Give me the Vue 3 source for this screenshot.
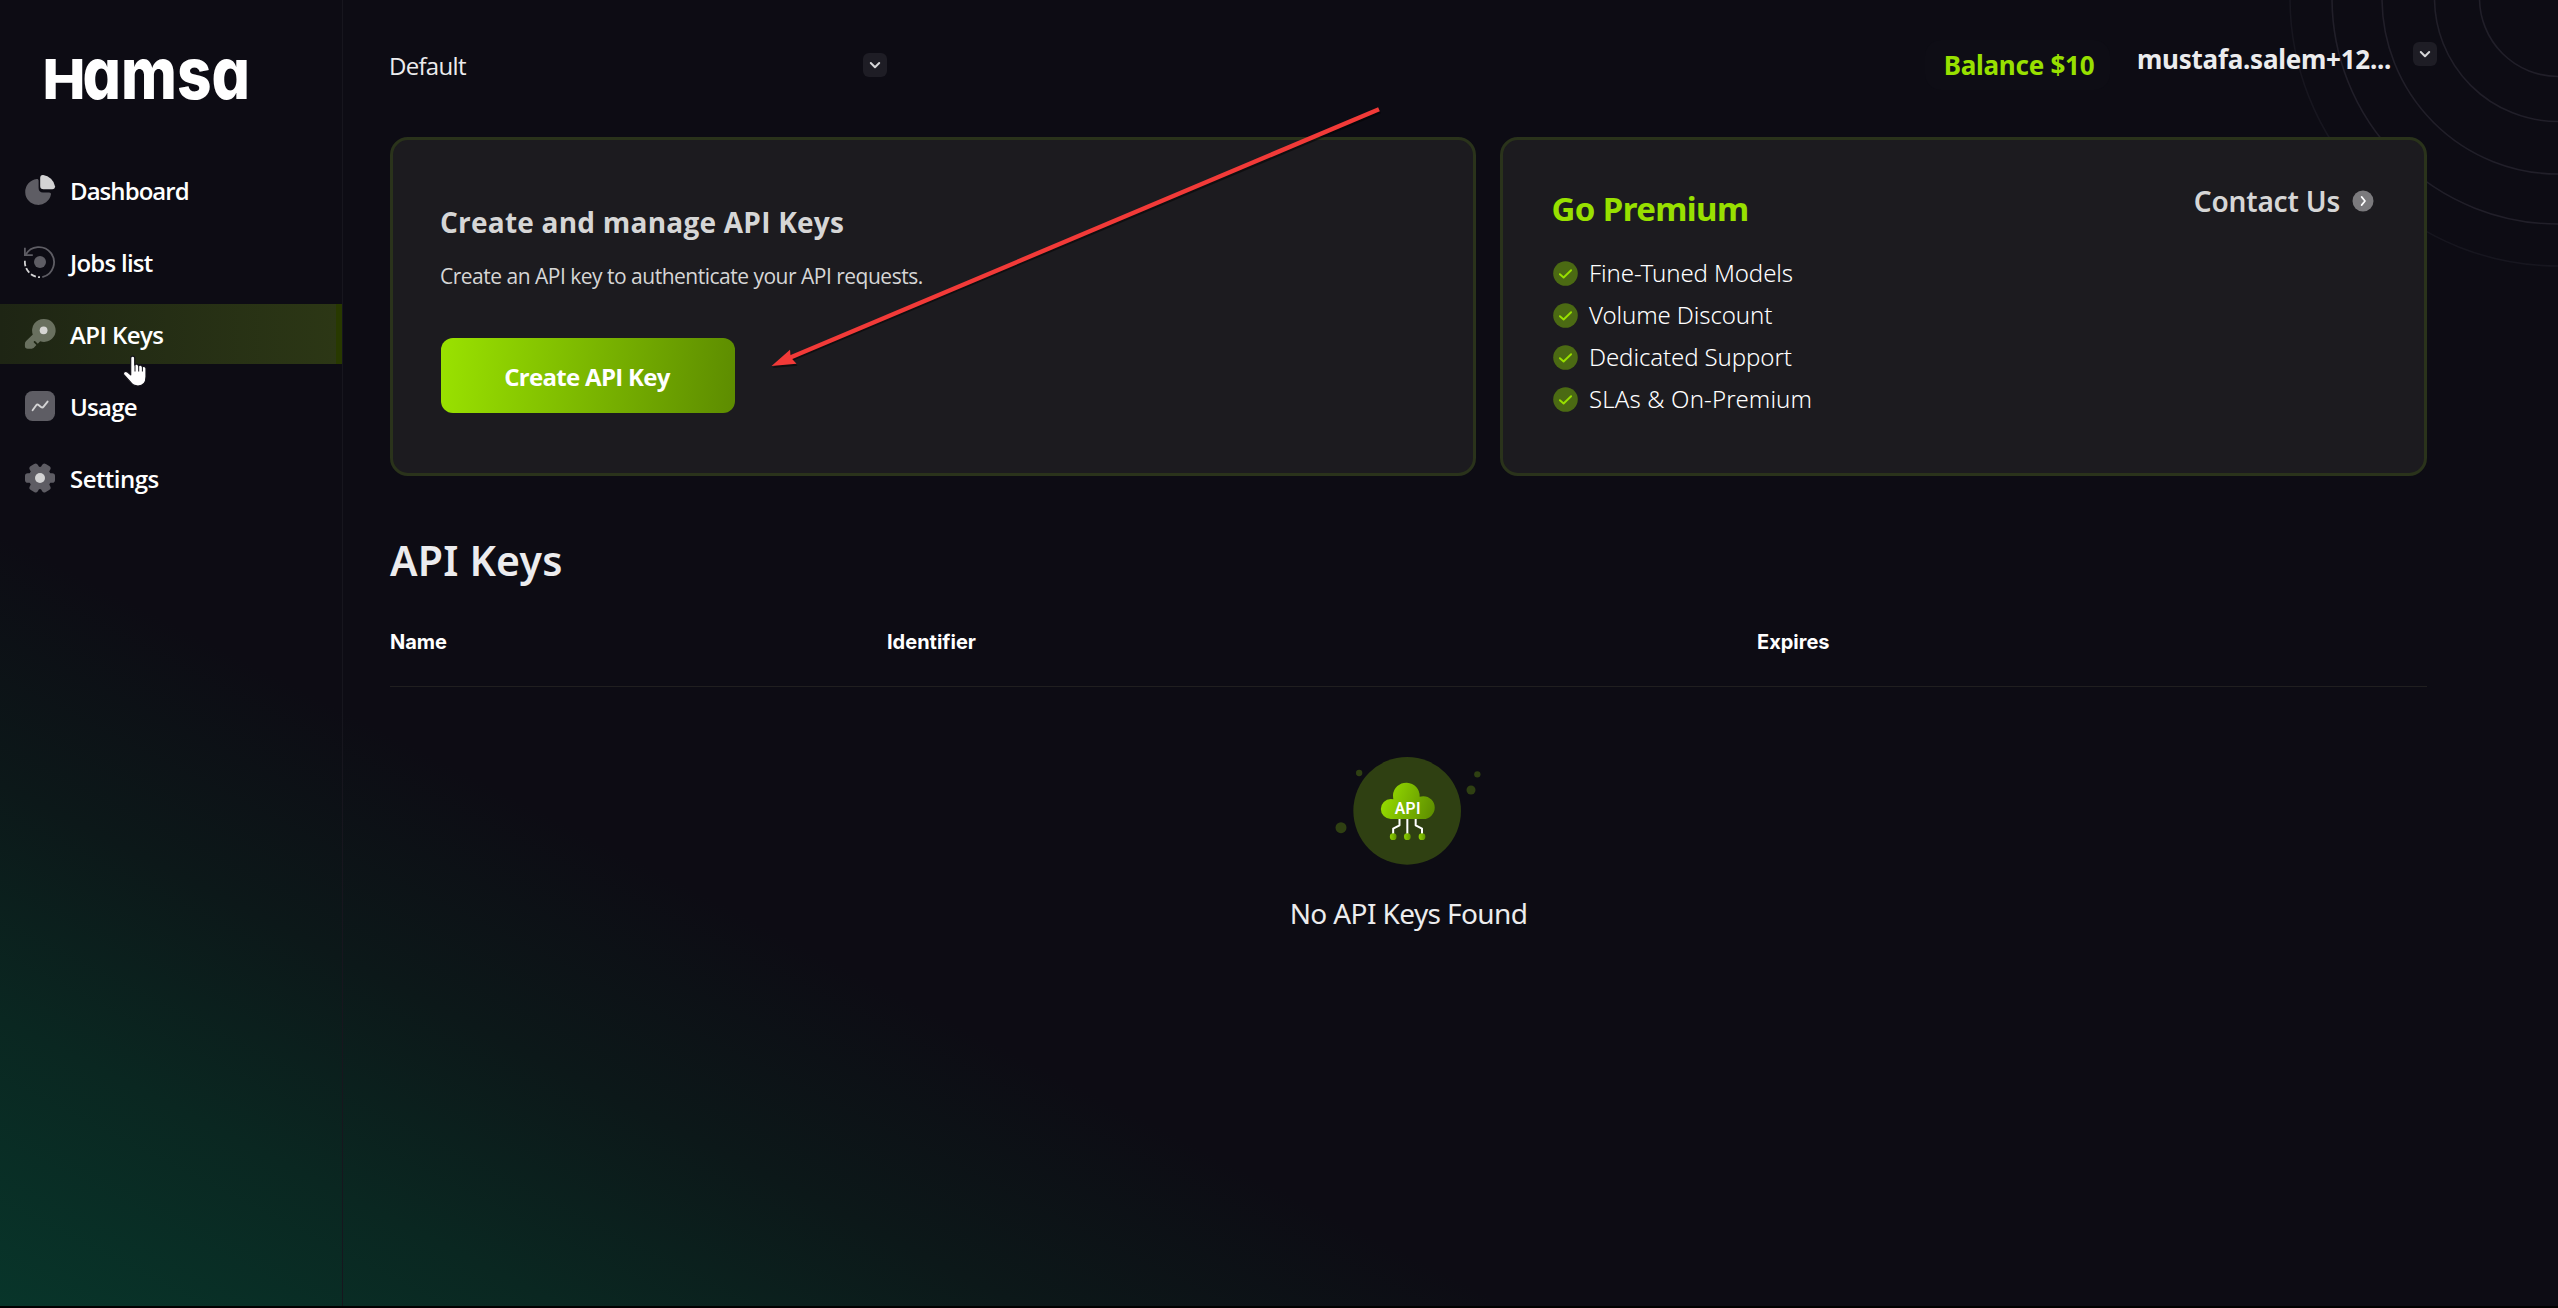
<script setup>
const navItems = [
  { id: 'dashboard', label: 'Dashboard' },
  { id: 'jobs', label: 'Jobs list' },
  { id: 'keys', label: 'API Keys', active: true },
  { id: 'usage', label: 'Usage' },
  { id: 'settings', label: 'Settings' }
]
const perks = ['Fine-Tuned Models', 'Volume Discount', 'Dedicated Support', 'SLAs & On-Premium']
const columns = ['Name', 'Identifier', 'Expires']
const rings = [78.5, 123.5, 176, 226]
</script>

<template>
  <div class="app">
    <svg class="rings" width="280" height="280" viewBox="2278 0 280 280" fill="none">
      <circle v-for="r in rings" :key="r" cx="2558" cy="-2" :r="r" stroke="#211f29" stroke-width="1.6" />
      <circle cx="2558" cy="-2" r="268" stroke="#17161f" stroke-width="1.6" />
    </svg>

    <aside class="sidebar">
      <div class="logo">
        <svg width="230" height="124" viewBox="0 0 230 124" fill="#fff">
          <text class="logo-cap" x="2.5" y="79" textLength="43" lengthAdjust="spacingAndGlyphs">H</text>
          <text class="logo-low" x="42.500" y="79" textLength="167.500" lengthAdjust="spacingAndGlyphs">amsa</text>
        </svg>
      </div>

      <nav class="nav">
        <a v-for="item in navItems" :key="item.id" class="nav-item" :class="{ active: item.active }">
          <svg v-if="item.id === 'dashboard'" width="32" height="32" viewBox="0 0 32 32">
            <path fill="#5e5d64" d="M12.7 5c1.2-.1 1.9.6 1.900 1.700V14c0 3 1.600 4.400 4.400 4.400h6c1.400 0 2.100.7 2 1.900A13 13 0 1 1 12.700 5z" />
            <path fill="#d3d3d4" d="M16.200 4c0-2 1-3.100 3-2.900A13.500 13.500 0 0 1 31 12.300c.1 2-.9 3-2.800 3h-8.700c-2.200 0-3.300-1.100-3.300-3.300z" />
          </svg>
          <svg v-else-if="item.id === 'jobs'" width="32" height="32" viewBox="0 0 32 32" fill="none">
            <path d="M1.600 8.800A15.200 15.200 0 1 1 19 30.900" stroke="#5e5d64" stroke-width="1.800" stroke-linecap="round" />
            <path d="M.9 1.800V9.100H8.800" stroke="#5e5d64" stroke-width="1.800" />
            <path d="M.9 14.800A15.200 15.200 0 0 0 16 31.200" stroke="#d3d3d4" stroke-width="1.800" stroke-dasharray="5.400 2.200" />
            <circle cx="16" cy="16" r="6" fill="#5e5d64" />
          </svg>
          <svg v-else-if="item.id === 'keys'" width="32" height="32" viewBox="0 0 32 32">
            <path fill="#69705f" d="M19.700.9a11.500 11.500 0 1 1-3.500 22.300L13.800 25.700 11.200 23.300c-.9-.7-2 .3-1.300 1.200l2.500 2.600-2.300 2.500c-.7.800-1.400 1.100-2.500 1.100H3.700C1.900 30.700.9 29.700.9 28v-2c0-1.200.4-2.100 1.200-2.900l6.700-6.700A11.500 11.500 0 0 1 19.700.9z" />
            <circle cx="19.600" cy="12.300" r="3.900" fill="#d6d6d4" />
          </svg>
          <svg v-else-if="item.id === 'usage'" width="32" height="32" viewBox="0 0 32 32" fill="none">
            <rect x="1" y="1" width="30" height="30" rx="7.500" fill="#5e5d64" />
            <path d="M8.600 20.200l3.600-4.900c.6-.8 1.500-.9 2.300-.4l2.500 2c.9.700 1.900.6 2.600-.3l4-5" stroke="#d3d3d4" stroke-width="1.900" stroke-linecap="round" stroke-linejoin="round" />
          </svg>
          <svg v-else width="32" height="32" viewBox="0 0 32 32">
            <g fill="#5e5d64">
              <circle cx="16" cy="16" r="11.300" />
              <rect v-for="a in [0, 60, 120]" :key="a" x="1" y="11.300" width="30" height="9.400" rx="2.800" :transform="`rotate(${a} 16 16)`" />
            </g>
            <circle cx="16" cy="16" r="5" fill="#d3d3d4" />
          </svg>
          <span>{{ item.label }}</span>
        </a>
      </nav>
    </aside>

    <main class="main">
      <header class="header">
        <div class="project">
          <span>Default</span>
          <i class="chev"><svg width="24" height="24" viewBox="0 0 24 24" fill="none"><path d="M7.800 10L12 14.200 16.200 10" stroke="#d6d6d8" stroke-width="2" stroke-linecap="round" stroke-linejoin="round" /></svg></i>
        </div>
        <div class="account">
          <div class="balance">Balance $10</div>
          <div class="user">mustafa.salem+12...</div>
          <i class="chev user-chev"><svg width="24" height="24" viewBox="0 0 24 24" fill="none"><path d="M7.800 10L12 14.200 16.200 10" stroke="#d6d6d8" stroke-width="2" stroke-linecap="round" stroke-linejoin="round" /></svg></i>
        </div>
      </header>

      <section class="cards">
        <div class="card create">
          <h2>Create and manage API Keys</h2>
          <p>Create an API key to authenticate your API requests.</p>
          <button>Create API Key</button>
        </div>
        <div class="card premium">
          <div>
            <h2>Go Premium</h2>
            <ul>
              <li v-for="perk in perks" :key="perk">
                <svg width="25" height="25" viewBox="0 0 25 25" fill="none"><circle cx="12.500" cy="12.500" r="12.300" fill="#4b6a13" /><path d="M6.900 13.200l3.700 3.300 7.500-7.300" stroke="#98e000" stroke-width="1.900" stroke-linecap="round" stroke-linejoin="round" /></svg>
                <span>{{ perk }}</span>
              </li>
            </ul>
          </div>
          <a class="contact">
            Contact Us
            <svg width="22" height="22" viewBox="0 0 22 22" fill="none"><circle cx="11" cy="11" r="10.500" fill="#7b7a7d" /><path d="M9.600 6.900l3.400 4.100-3.400 4.100" stroke="#fff" stroke-width="1.700" stroke-linecap="round" stroke-linejoin="round" /></svg>
          </a>
        </div>
      </section>

      <h1>API Keys</h1>
      <div class="thead">
        <span v-for="c in columns" :key="c">{{ c }}</span>
      </div>

      <div class="empty">
        <svg width="152" height="110" viewBox="217.500 78 456 330" fill="none">
          <defs>
            <linearGradient id="cloud" x1="360" y1="190" x2="522" y2="250" gradientUnits="userSpaceOnUse">
              <stop stop-color="#98e000" /><stop offset="1" stop-color="#5d8d00" />
            </linearGradient>
            <linearGradient id="node" x1="0" y1="0" x2="1" y2="0">
              <stop stop-color="#8dd100" /><stop offset="1" stop-color="#649800" />
            </linearGradient>
          </defs>
          <g fill="#2f4012">
            <circle cx="440" cy="242.500" r="161.500" />
            <circle cx="296" cy="129" r="9.500" />
            <circle cx="650.500" cy="133" r="9.500" />
            <circle cx="631.500" cy="180" r="13.500" />
            <circle cx="241.500" cy="293" r="16.500" />
          </g>
          <path fill="url(#cloud)" d="M391 267a30 30 0 0 1 0-60q4 0 7.500 1-1-5-1-12a40 40 0 0 1 80 4q5-1.500 11-1.500a33.500 33.500 0 0 1 0 68.500z" />
          <g stroke="#fff" stroke-width="6" stroke-linejoin="round">
            <path d="M417 267v19l-19 10v16" /><path d="M440.500 267v45" /><path d="M465.500 267v19l19 10v16" />
          </g>
          <g fill="url(#node)"><circle cx="398" cy="320" r="10" /><circle cx="440.500" cy="320" r="10" /><circle cx="484.500" cy="320" r="10" /></g>
          <text class="api" x="403" y="251" textLength="77" lengthAdjust="spacing">API</text>
        </svg>
        <p>No API Keys Found</p>
      </div>
    </main>

    <svg class="arrow" width="620" height="270" viewBox="765 102 620 270">
      <g transform="translate(1 2)" opacity=".45" fill="#000" stroke="#000">
        <path d="M1379 109.300L788 358" stroke-width="4.400" /><path stroke="none" d="M771.500 366L790 350l1 7.500 5.500 6.200z" />
      </g>
      <path d="M1379 109.300L788 358.500" stroke="#f23a38" stroke-width="4.400" />
      <path fill="#f23a38" d="M771.500 366L790 349.800l.8 7.700 5.700 6.300z" />
    </svg>

    <svg class="cursor" width="30" height="36" viewBox="0 0 30 36">
      <path fill="#fff" stroke="#14131a" stroke-width="1.200" stroke-linejoin="round" d="M11.700 3.200c1.100 0 2 .9 2 2v6.700c.4-.5 1-.8 1.700-.8 1 0 1.900.7 2.100 1.700.4-.5 1-.7 1.600-.7 1.100 0 2 .8 2.200 1.800.4-.4.9-.6 1.400-.6 1.300 0 2.300 1 2.300 2.300v8.200c0 5.600-3.200 9.200-8 9.200-3.400 0-5.800-1.400-7.700-4.100L3 21.900c-.8-1-.7-2.200.1-2.900.9-.8 2.200-.8 3.400.1l3.200 2.800V5.200c0-1.100.9-2 2-2z" />
      <path d="M14 12v6.500M17.700 13v5.500M21.400 14v4.500" stroke="#14131a" stroke-width="1" fill="none" />
    </svg>
  </div>
</template>

<style>
body { margin: 0; background: #000; }
</style>

<style scoped>
.app {
  position: relative;
  z-index: 0;
  box-sizing: border-box;
  display: flex;
  width: 2558px;
  height: 1308px;
  overflow: hidden;
  border-bottom: 2px solid #000;
  color: #fff;
  font-family: "Open Sans", "Noto Sans", sans-serif;
  background: linear-gradient(to top right, #08352a 0%, #0a2721 11%, #0c1819 20%, #0d0c14 29.5%);
}
h1, h2, p, ul { margin: 0; padding: 0; font-weight: inherit; }
svg { display: block; flex: none; }
.rings { position: absolute; z-index: -1; top: 0; right: 0; }

.sidebar { width: 342px; flex: none; border-right: 1px solid #17161e; }
.logo { height: 140px; padding: 20px 0 0 40px; }
.logo-low { font: 800 72px Inter, sans-serif; font-feature-settings: "cv11"; }
.logo-cap { font: 800 55px Inter, sans-serif; }
.nav { display: flex; flex-direction: column; gap: 12px; }
.nav-item {
  display: flex;
  align-items: center;
  gap: 14px;
  box-sizing: border-box;
  height: 60px;
  padding-left: 24px;
  font-size: 24px;
  font-weight: 600;
  line-height: 58px;
  letter-spacing: -0.75px;
}
.nav-item:first-child { letter-spacing: -0.95px; }
.nav-item.active, .nav-item:last-child { letter-spacing: -0.55px; }
.nav-item span { padding-top: 2px; }
.nav-item.active {
  border-right: 6px solid #283900;
  background: linear-gradient(90deg, #1e2514, #2c3715);
}

.main { width: 2037px; padding-left: 47px; flex: none; }
.header { display: flex; justify-content: space-between; height: 137px; margin-right: -10px; }
.project {
  display: flex;
  align-items: flex-start;
  justify-content: space-between;
  width: 498px;
  margin-left: -1px;
  color: #ececee;
  font-size: 24px;
  line-height: 32px;
  letter-spacing: -0.7px;
}
.project span { padding-top: 50px; }
.chev { width: 24px; height: 24px; margin-top: 53px; border-radius: 6px; background: #1e1d25; }
.account { display: flex; align-items: flex-start; font: 700 26px/50px "Noto Sans", sans-serif; }
.balance {
  box-sizing: border-box;
  width: 185px;
  height: 50px;
  margin-top: 40px;
  padding-left: 3px;
  border-radius: 16px;
  background: #0e0d15;
  color: #98e000;
  letter-spacing: -0.25px;
  text-align: center;
}
.user { width: 276px; margin: 34px 0 0 27px; color: #ececee; letter-spacing: -0.25px; }
.user-chev { margin-top: 42px; }

.cards { display: flex; gap: 24px; }
.card { position: relative; box-sizing: border-box; height: 339px; border: 3px solid #2a331b; border-radius: 18px; background: #1c1b1f; }
.create { width: 1086px; padding: 61px 0 0 47px; }
.create h2 { color: #d6d6d6; font-size: 28px; font-weight: 700; line-height: 42px; letter-spacing: 0.23px; }
.create p { margin-top: 18px; color: #d6d6d6; font-size: 21px; line-height: 30px; letter-spacing: -0.5px; }
.create button {
  display: block;
  width: 294px;
  height: 75px;
  margin: 47px 0 0 1px;
  padding: 1px 2px 0 0;
  border: 0;
  border-radius: 12px;
  background: linear-gradient(95deg, #9ae200, #5d8c00);
  color: #fff;
  font: 700 24px "Open Sans", sans-serif;
  letter-spacing: -0.7px;
}
.premium { display: flex; justify-content: space-between; width: 927px; padding: 42px 50px 0 50px; font-family: "Noto Sans", sans-serif; }
.premium h2 { margin-left: -1.5px; padding-top: 1px; color: #98e000; font-size: 33px; font-weight: 700; line-height: 52px; letter-spacing: -0.6px; }
.premium ul { margin-top: 17px; list-style: none; }
.premium li { display: flex; align-items: center; gap: 11px; height: 42px; font-size: 24px; font-weight: 300; line-height: 42px; letter-spacing: -0.1px; }
.premium li:last-child { letter-spacing: 0.15px; }
.contact { display: flex; align-items: center; gap: 12px; height: 38px; color: #d6d6d6; font-size: 28px; font-weight: 600; letter-spacing: -0.2px; }

h1 { margin-top: 60px; color: #ececee; font: 600 41px/48px "Noto Sans", sans-serif; letter-spacing: 0.2px; }
.thead {
  display: grid;
  grid-template-columns: 497px 870px 1fr;
  height: 102px;
  border-bottom: 1px solid #201f20;
  font: 700 20px/117px Inter, "Noto Sans", sans-serif;
}
.empty { display: flex; flex-direction: column; align-items: center; padding-top: 69px; }
.empty p { margin-top: 27px; color: #ececee; font: 400 28px/40px "Noto Sans", sans-serif; letter-spacing: -0.6px; }
.api { fill: #fff; font: 600 47px Roboto, sans-serif; }

.arrow { position: absolute; left: 765px; top: 102px; }
.cursor { position: absolute; left: 121px; top: 353px; }
</style>
